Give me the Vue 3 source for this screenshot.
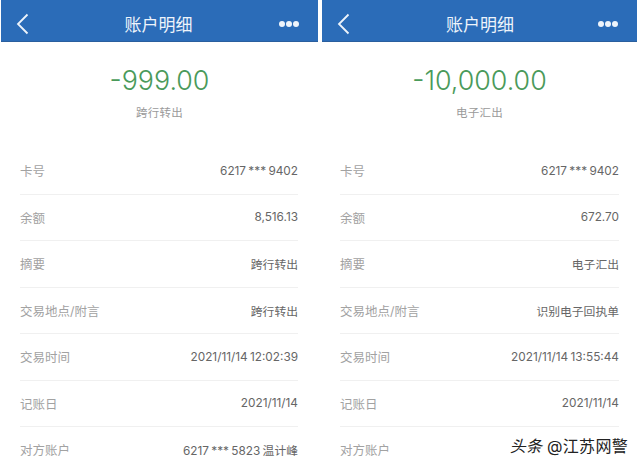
<script setup>
const panels = [
  {
    amount: '-999.00', type: '跨行转出',
    rows: [
      ['卡号', '6217 *** 9402'], ['余额', '8,516.13'], ['摘要', '跨行转出'],
      ['交易地点/附言', '跨行转出'], ['交易时间', '2021/11/14 12:02:39'],
      ['记账日', '2021/11/14'], ['对方账户', '6217 *** 5823 温计峰'],
    ],
  },
  {
    amount: '-10,000.00', type: '电子汇出',
    rows: [
      ['卡号', '6217 *** 9402'], ['余额', '672.70'], ['摘要', '电子汇出'],
      ['交易地点/附言', '识别电子回执单'], ['交易时间', '2021/11/14 13:55:44'],
      ['记账日', '2021/11/14'], ['对方账户', ''],
    ],
  },
]
</script>

<template>
  <div class="page">
    <section v-for="p in panels" :key="p.amount" class="panel">
      <header class="bar">
        <svg class="back" width="14" height="22" viewBox="0 0 14 22">
          <path d="M12.5 1.5 L3 11 L12.5 20.5" fill="none" stroke="#eef4fb" stroke-width="1.8" />
        </svg>
        <span class="title">账户明细</span>
        <span class="dots"><i></i><i></i><i></i></span>
      </header>
      <div class="amount">{{ p.amount }}</div>
      <div class="type">{{ p.type }}</div>
      <ul class="rows">
        <li v-for="r in p.rows" :key="r[0]" class="row">
          <span class="label">{{ r[0] }}</span>
          <span class="value">{{ r[1] }}</span>
        </li>
      </ul>
    </section>
    <div class="mark"><em>头条</em> @江苏网警</div>
  </div>
</template>

<style>
html, body { margin: 0; background: #fff; }
</style>

<style scoped>
.page {
  position: relative;
  width: 640px;
  height: 468px;
  overflow: hidden;
  display: flex;
  gap: 4px;
  padding-left: 1px;
  box-sizing: border-box;
  background: #fff;
  font-family: Inter, "Noto Sans CJK SC", sans-serif;
}
.panel { width: 317px; flex: none; }
.panel + .panel { width: 315px; }
.panel + .panel .rows { padding: 0 18px; }
.panel + .panel .title { margin-left: 6px; }
.bar {
  height: 42px;
  box-sizing: border-box;
  padding: 6px 19px 0 14px;
  background: #2b6cb8;
  border-bottom: 1px solid #2a5f9e;
  display: grid;
  grid-template-columns: 1fr auto 1fr;
  align-items: center;
  color: #eef4fb;
}
.title { font-size: 17px; margin-left: 3px; }
.dots { display: flex; gap: 1px; justify-self: end; }
.dots i { width: 6px; height: 6px; border-radius: 50%; background: #eef4fb; }
.amount {
  margin-top: 20px;
  height: 36px;
  line-height: 36px;
  text-align: center;
  font-size: 26.8px;
  font-weight: 300;
  color: #4a9a5a;
}
.type {
  margin-top: 7px;
  height: 16px;
  line-height: 16px;
  text-align: center;
  font-size: 11.5px;
  color: #9a9a9a;
  letter-spacing: 0.3px;
}
.rows { list-style: none; margin: 27px 0 0; padding: 0 20px 0 19px; }
.row {
  height: 46.5px;
  box-sizing: border-box;
  border-bottom: 1px solid #f0f0f0;
  display: flex;
  align-items: center;
  justify-content: space-between;
}
.label { color: #a2a2a2; font-size: 12.5px; }
.value { color: #666; font-size: 11.8px; word-spacing: -1px; }
.mark {
  position: absolute;
  right: 12px;
  bottom: 11px;
  font-size: 16px;
  color: #222;
  letter-spacing: 0.3px;
  text-shadow: 0 0 2px #fff, 0 0 2px #fff;
}
.mark em { font-style: italic; }
</style>
